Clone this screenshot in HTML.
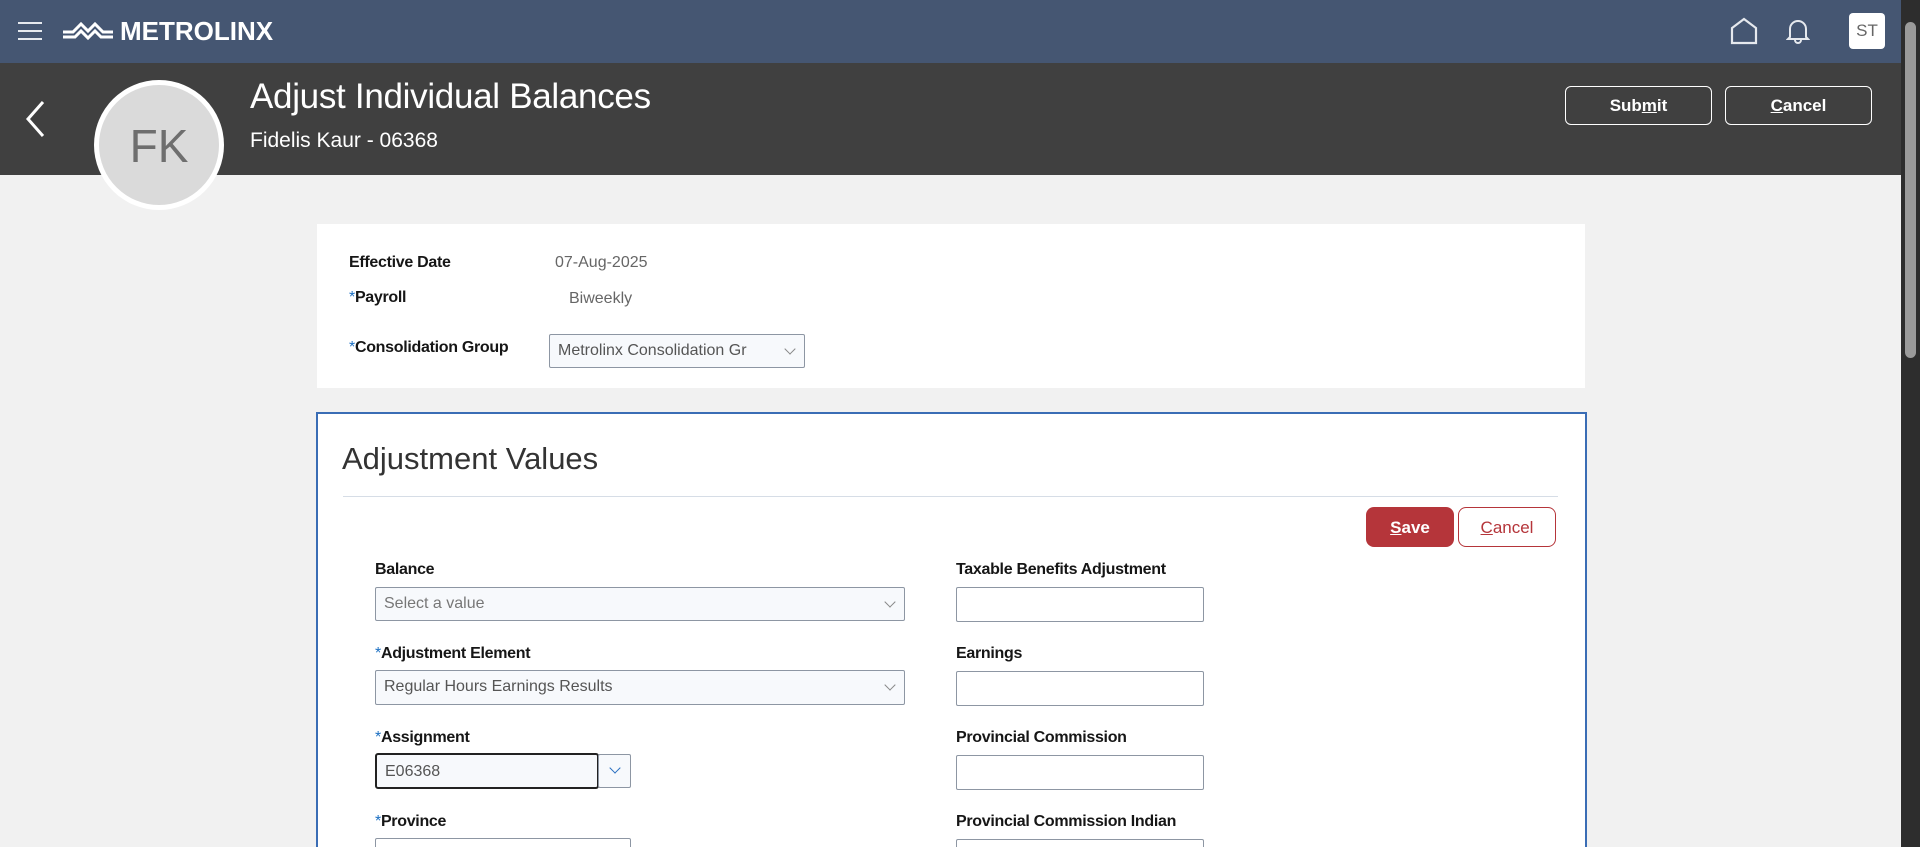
<!DOCTYPE html>
<html><head><meta charset="utf-8"><style>
*{box-sizing:border-box;margin:0;padding:0}
html{width:1920px;height:847px;overflow:hidden}
body{width:1920px;height:847px;overflow:hidden;background:#f1f1f1;font-family:"Liberation Sans",sans-serif;position:relative}
.a{position:absolute}
.top{left:0;top:0;width:1901px;height:63px;background:#455672}
.band{left:0;top:63px;width:1901px;height:112px;background:#404040}
.sb{left:1901px;top:0;width:19px;height:847px;background:#2d2d2d}
.lbl{font-size:16px;color:#161616;font-weight:bold;letter-spacing:-0.3px}
.st{color:#1b6fc2;font-weight:normal}
.box{border:1px solid #8d96a3;border-radius:2px;background:#fff}
.sel{background:#f7f9fc;font-size:16px;color:#555;padding-left:8px;line-height:32px}
.chev{position:absolute;right:10px;top:10px;width:8px;height:8px;border-right:1px solid #888;border-bottom:1px solid #888;transform:rotate(45deg)}
.btn{border:1px solid #fff;border-radius:6px;color:#fff;font-weight:bold;font-size:17px;text-align:center;line-height:38px}
</style></head><body>
<div class="a top"></div>
<div class="a band"></div>
<div class="a sb"><div class="a" style="left:4px;top:22px;width:11px;height:336px;background:#9a9a9a;border-radius:6px"></div></div>
<div class="a" style="left:18px;top:22px;width:24px;height:2px;background:#e6e9ee"></div>
<div class="a" style="left:18px;top:30px;width:24px;height:2px;background:#e6e9ee"></div>
<div class="a" style="left:18px;top:38px;width:24px;height:2px;background:#e6e9ee"></div>
<svg class="a" style="left:62px;top:20px" width="52" height="22" viewBox="0 0 52 22"><path d="M1 12h10l8-8 7 7 7-7 8 8h10M1 17h12l6-6 7 7 7-7 6 6h12" stroke="#fff" stroke-width="3" fill="none"/></svg>
<div class="a" style="left:120px;top:16px;font-size:26px;font-weight:bold;color:#fff;letter-spacing:0">METROLINX</div>
<svg class="a" style="left:1729px;top:17px" width="30" height="28" viewBox="0 0 30 28"><path d="M3 26V11L15 2l12 9v15z" stroke="#e6e9ee" stroke-width="2.2" fill="none"/></svg>
<svg class="a" style="left:1786px;top:18px" width="24" height="26" viewBox="0 0 24 26"><path d="M4 19V11a8 8 0 0116 0v8l2 2H2zM9 22a3 3 0 006 0" stroke="#e6e9ee" stroke-width="2" fill="none"/></svg>
<div class="a" style="left:1849px;top:13px;width:36px;height:36px;background:#fff;border-radius:4px;color:#666;font-size:17px;text-align:center;line-height:36px">ST</div>
<svg class="a" style="left:24px;top:100px" width="22" height="38" viewBox="0 0 22 38"><path d="M19 2L4 19l15 17" stroke="#fff" stroke-width="3" fill="none"/></svg>
<div class="a" style="left:94px;top:80px;width:130px;height:130px;border-radius:50%;background:#fff"></div>
<div class="a" style="left:99px;top:85px;width:120px;height:120px;border-radius:50%;background:#dadada;color:#6e6e6e;font-size:46px;text-align:center;line-height:122px">FK</div>
<div class="a" style="left:250px;top:77px;font-size:35px;color:#fff;font-weight:300;letter-spacing:-0.3px">Adjust Individual Balances</div>
<div class="a" style="left:250px;top:129px;font-size:21px;color:#fff">Fidelis Kaur - 06368</div>
<div class="a btn" style="left:1565px;top:86px;width:147px;height:39px">Sub<u>m</u>it</div>
<div class="a btn" style="left:1725px;top:86px;width:147px;height:39px"><u>C</u>ancel</div>
<div class="a" style="left:317px;top:224px;width:1268px;height:164px;background:#fff"></div>
<div class="a lbl" style="left:349px;top:254px">Effective Date</div>
<div class="a" style="left:555px;top:254px;font-size:16px;color:#666">07-Aug-2025</div>
<div class="a lbl" style="left:349px;top:289px"><span class="st">*</span>Payroll</div>
<div class="a" style="left:569px;top:290px;font-size:16px;color:#666">Biweekly</div>
<div class="a lbl" style="left:349px;top:339px"><span class="st">*</span>Consolidation Group</div>
<div class="a box sel" style="left:549px;top:334px;width:256px;height:34px">Metrolinx Consolidation Gr<div class="chev"></div></div>
<div class="a" style="left:316px;top:412px;width:1271px;height:440px;background:#fff;border:2px solid #3a6db5;border-bottom:none"></div>
<div class="a" style="left:342px;top:441px;font-size:31px;color:#333;font-weight:300">Adjustment Values</div>
<div class="a" style="left:343px;top:496px;width:1215px;height:1px;background:#d6dde6"></div>
<div class="a" style="left:1366px;top:507px;width:88px;height:40px;background:#b5353a;border-radius:8px;color:#fff;font-weight:bold;font-size:17px;text-align:center;line-height:42px"><u>S</u>ave</div>
<div class="a" style="left:1458px;top:507px;width:98px;height:40px;border:1px solid #b5353a;border-radius:8px;color:#b5353a;font-size:17px;text-align:center;line-height:40px"><u>C</u>ancel</div>
<div class="a lbl" style="left:375px;top:561px">Balance</div>
<div class="a box sel" style="left:375px;top:587px;width:530px;height:34px;color:#777">Select a value<div class="chev"></div></div>
<div class="a lbl" style="left:375px;top:645px"><span class="st">*</span>Adjustment Element</div>
<div class="a box sel" style="left:375px;top:670px;width:530px;height:35px">Regular Hours Earnings Results<div class="chev"></div></div>
<div class="a lbl" style="left:375px;top:729px"><span class="st">*</span>Assignment</div>
<div class="a" style="left:375px;top:753px;width:224px;height:36px;border:2px solid #222;border-radius:3px;background:#f7f9fc;font-size:16px;color:#555;padding-left:8px;line-height:34px">E06368</div>
<div class="a box" style="left:598px;top:754px;width:33px;height:34px;background:#f7f9fc"><div class="chev" style="border-color:#2a6fc0;right:11px;top:9px"></div></div>
<div class="a lbl" style="left:375px;top:813px"><span class="st">*</span>Province</div>
<div class="a box" style="left:375px;top:838px;width:256px;height:30px"></div>
<div class="a lbl" style="left:956px;top:561px">Taxable Benefits Adjustment</div>
<div class="a box" style="left:956px;top:587px;width:248px;height:35px"></div>
<div class="a lbl" style="left:956px;top:645px">Earnings</div>
<div class="a box" style="left:956px;top:671px;width:248px;height:35px"></div>
<div class="a lbl" style="left:956px;top:729px">Provincial Commission</div>
<div class="a box" style="left:956px;top:755px;width:248px;height:35px"></div>
<div class="a lbl" style="left:956px;top:813px">Provincial Commission Indian</div>
<div class="a box" style="left:956px;top:839px;width:248px;height:30px"></div>
</body></html>
